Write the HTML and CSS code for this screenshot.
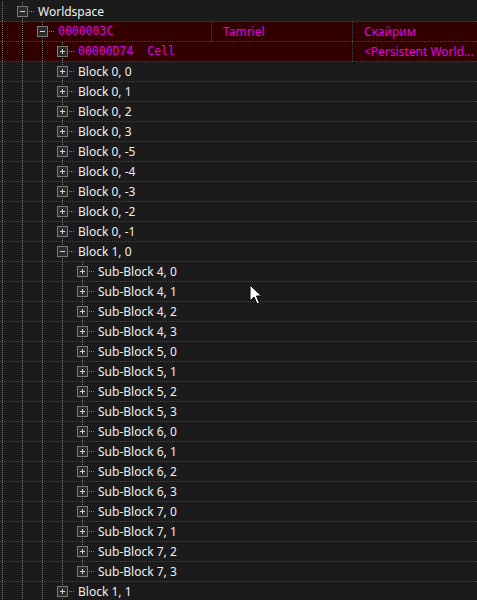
FILE: index.html
```html
<!DOCTYPE html>
<html lang="en">
<head>
    <meta charset="UTF-8">
    <title>Worldspace tree</title>
    <link rel="stylesheet" href="styles.css">
</head>
<body>
    <div class="tree">
        <div class="row">
            <div class="name"><span class="g root"></span><span class="exp tee"><i class="box minus"></i></span><span class="label">Worldspace</span></div>
        </div>
        <div class="row sel">
            <div class="name fixed"><span class="g root"></span><span class="g v"></span><span class="exp tee"><i class="box minus"></i></span><span class="label mono">0000003C</span></div>
            <div class="col mid">Tamriel</div>
            <div class="col last">Скайрим</div>
        </div>
        <div class="row sel">
            <div class="name wide"><span class="g root"></span><span class="g v"></span><span class="g v"></span><span class="exp tee"><i class="box"></i></span><span class="label mono">00000D74&nbsp;&nbsp;Cell</span></div>
            <div class="col last">&lt;Persistent World...</div>
        </div>
        <div class="row"><div class="name"><span class="g root"></span><span class="g v"></span><span class="g v"></span><span class="exp tee"><i class="box"></i></span><span class="label">Block 0, 0</span></div></div>
        <div class="row"><div class="name"><span class="g root"></span><span class="g v"></span><span class="g v"></span><span class="exp tee"><i class="box"></i></span><span class="label">Block 0, 1</span></div></div>
        <div class="row"><div class="name"><span class="g root"></span><span class="g v"></span><span class="g v"></span><span class="exp tee"><i class="box"></i></span><span class="label">Block 0, 2</span></div></div>
        <div class="row"><div class="name"><span class="g root"></span><span class="g v"></span><span class="g v"></span><span class="exp tee"><i class="box"></i></span><span class="label">Block 0, 3</span></div></div>
        <div class="row"><div class="name"><span class="g root"></span><span class="g v"></span><span class="g v"></span><span class="exp tee"><i class="box"></i></span><span class="label">Block 0, -5</span></div></div>
        <div class="row"><div class="name"><span class="g root"></span><span class="g v"></span><span class="g v"></span><span class="exp tee"><i class="box"></i></span><span class="label">Block 0, -4</span></div></div>
        <div class="row"><div class="name"><span class="g root"></span><span class="g v"></span><span class="g v"></span><span class="exp tee"><i class="box"></i></span><span class="label">Block 0, -3</span></div></div>
        <div class="row"><div class="name"><span class="g root"></span><span class="g v"></span><span class="g v"></span><span class="exp tee"><i class="box"></i></span><span class="label">Block 0, -2</span></div></div>
        <div class="row"><div class="name"><span class="g root"></span><span class="g v"></span><span class="g v"></span><span class="exp tee"><i class="box"></i></span><span class="label">Block 0, -1</span></div></div>
        <div class="row"><div class="name"><span class="g root"></span><span class="g v"></span><span class="g v"></span><span class="exp tee"><i class="box minus"></i></span><span class="label">Block 1, 0</span></div></div>
        <div class="row"><div class="name"><span class="g root"></span><span class="g v"></span><span class="g v"></span><span class="g v"></span><span class="exp tee"><i class="box"></i></span><span class="label">Sub-Block 4, 0</span></div></div>
        <div class="row"><div class="name"><span class="g root"></span><span class="g v"></span><span class="g v"></span><span class="g v"></span><span class="exp tee"><i class="box"></i></span><span class="label">Sub-Block 4, 1</span></div></div>
        <div class="row"><div class="name"><span class="g root"></span><span class="g v"></span><span class="g v"></span><span class="g v"></span><span class="exp tee"><i class="box"></i></span><span class="label">Sub-Block 4, 2</span></div></div>
        <div class="row"><div class="name"><span class="g root"></span><span class="g v"></span><span class="g v"></span><span class="g v"></span><span class="exp tee"><i class="box"></i></span><span class="label">Sub-Block 4, 3</span></div></div>
        <div class="row"><div class="name"><span class="g root"></span><span class="g v"></span><span class="g v"></span><span class="g v"></span><span class="exp tee"><i class="box"></i></span><span class="label">Sub-Block 5, 0</span></div></div>
        <div class="row"><div class="name"><span class="g root"></span><span class="g v"></span><span class="g v"></span><span class="g v"></span><span class="exp tee"><i class="box"></i></span><span class="label">Sub-Block 5, 1</span></div></div>
        <div class="row"><div class="name"><span class="g root"></span><span class="g v"></span><span class="g v"></span><span class="g v"></span><span class="exp tee"><i class="box"></i></span><span class="label">Sub-Block 5, 2</span></div></div>
        <div class="row"><div class="name"><span class="g root"></span><span class="g v"></span><span class="g v"></span><span class="g v"></span><span class="exp tee"><i class="box"></i></span><span class="label">Sub-Block 5, 3</span></div></div>
        <div class="row"><div class="name"><span class="g root"></span><span class="g v"></span><span class="g v"></span><span class="g v"></span><span class="exp tee"><i class="box"></i></span><span class="label">Sub-Block 6, 0</span></div></div>
        <div class="row"><div class="name"><span class="g root"></span><span class="g v"></span><span class="g v"></span><span class="g v"></span><span class="exp tee"><i class="box"></i></span><span class="label">Sub-Block 6, 1</span></div></div>
        <div class="row"><div class="name"><span class="g root"></span><span class="g v"></span><span class="g v"></span><span class="g v"></span><span class="exp tee"><i class="box"></i></span><span class="label">Sub-Block 6, 2</span></div></div>
        <div class="row"><div class="name"><span class="g root"></span><span class="g v"></span><span class="g v"></span><span class="g v"></span><span class="exp tee"><i class="box"></i></span><span class="label">Sub-Block 6, 3</span></div></div>
        <div class="row"><div class="name"><span class="g root"></span><span class="g v"></span><span class="g v"></span><span class="g v"></span><span class="exp tee"><i class="box"></i></span><span class="label">Sub-Block 7, 0</span></div></div>
        <div class="row"><div class="name"><span class="g root"></span><span class="g v"></span><span class="g v"></span><span class="g v"></span><span class="exp tee"><i class="box"></i></span><span class="label">Sub-Block 7, 1</span></div></div>
        <div class="row"><div class="name"><span class="g root"></span><span class="g v"></span><span class="g v"></span><span class="g v"></span><span class="exp tee"><i class="box"></i></span><span class="label">Sub-Block 7, 2</span></div></div>
        <div class="row"><div class="name"><span class="g root"></span><span class="g v"></span><span class="g v"></span><span class="g v"></span><span class="exp end"><i class="box"></i></span><span class="label">Sub-Block 7, 3</span></div></div>
        <div class="row"><div class="name"><span class="g root"></span><span class="g v"></span><span class="g v"></span><span class="exp tee"><i class="box"></i></span><span class="label">Block 1, 1</span></div></div>
    </div>

    <!-- mouse pointer -->
    <svg class="cursor" width="14" height="22" viewBox="0 0 14 22">
        <path d="M1 1 L1 17 L5 13 L8 20 L10.5 19 L7.5 12 L12.5 12 Z" fill="#fff" stroke="#000" stroke-width="1" stroke-linejoin="miter"/>
    </svg>
</body>
</html>
```

FILE: styles.css
```css
* {
    margin: 0;
    padding: 0;
    box-sizing: border-box;
}

body {
    background: #1b1b1b;
    font-family: 'Noto Sans', 'Open Sans', sans-serif;
    font-size: 12px;
    color: #f0f0f0;
    overflow: hidden;
    position: relative;
    height: 600px;
}

.tree {
    padding-top: 2px;
}

.row {
    display: flex;
    height: 20px;
    background-image: linear-gradient(to right, #454545 50%, transparent 50%);
    background-size: 2px 1px;
    background-repeat: repeat-x;
    background-position: left bottom;
}

.row.sel {
    background-color: #330000;
    color: #e000e6;
}

.name {
    display: flex;
    flex: 1;
    height: 20px;
    overflow: hidden;
}

.name.fixed {
    flex: 0 0 211px;
}

.name.wide {
    flex: 0 0 352px;
}

/* tree guides */
.g {
    flex: 0 0 20px;
    height: 20px;
}

.g.root {
    flex-basis: 12px;
}

.g.root,
.g.v,
.exp.tee {
    background-image: linear-gradient(to bottom, #7a7a7a 50%, transparent 50%);
    background-size: 1px 2px;
    background-repeat: repeat-y;
}

.g.root {
    background-position: 2px 0;
}

.g.v,
.exp.tee {
    background-position: 10px 0;
}

.exp {
    flex: 0 0 20px;
    height: 20px;
    position: relative;
}

.exp.end::before {
    content: "";
    position: absolute;
    left: 10px;
    top: 0;
    width: 1px;
    height: 10px;
    background: linear-gradient(to bottom, #7a7a7a 50%, transparent 50%) 0 0 / 1px 2px repeat-y;
}

.exp::after {
    content: "";
    position: absolute;
    left: 17px;
    top: 9px;
    width: 6px;
    height: 1px;
    background: linear-gradient(to right, #7a7a7a 50%, transparent 50%) 0 0 / 2px 1px repeat-x;
}

.box {
    position: absolute;
    left: 5px;
    top: 4px;
    width: 11px;
    height: 11px;
    border: 1px solid #7a7a7a;
    background:
        linear-gradient(#d4d4d4, #d4d4d4) center / 5px 1px no-repeat,
        linear-gradient(#d4d4d4, #d4d4d4) center / 1px 5px no-repeat,
        #2c2c2c;
}

.box.minus {
    background:
        linear-gradient(#d4d4d4, #d4d4d4) center / 5px 1px no-repeat,
        #2c2c2c;
}

.label {
    margin-left: 6px;
    line-height: 19px;
    white-space: nowrap;
}

.mono {
    font-family: 'DejaVu Sans Mono', monospace;
    font-size: 11.5px;
}

.col {
    height: 20px;
    line-height: 19px;
    padding-left: 12px;
    white-space: nowrap;
    overflow: hidden;
    background-image: linear-gradient(to bottom, #454545 50%, transparent 50%);
    background-size: 1px 2px;
    background-repeat: repeat-y;
    background-position: 0 0;
}

.col.mid {
    flex: 0 0 141px;
}

.col.last {
    flex: 1;
}

.cursor {
    position: absolute;
    left: 249px;
    top: 284px;
}
```
